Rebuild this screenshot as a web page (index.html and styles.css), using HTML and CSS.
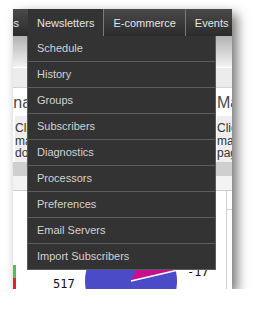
FILE: index.html
```html
<!DOCTYPE html>
<html lang="en">
<head>
    <meta charset="UTF-8">
    <meta name="viewport" content="width=device-width, initial-scale=1.0">
    <title>Newsletters menu</title>
    <link rel="stylesheet" href="styles.css">
</head>
<body>
    <div class="shot">
        <ul class="topnav">
            <li class="nav-item nav-cut"><span>Campaigns</span></li>
            <li class="nav-item active">Newsletters</li>
            <li class="nav-item">E-commerce</li>
            <li class="nav-item">Events</li>
        </ul>
        <div class="subbar"></div>
        <div class="crumbs"></div>

        <div class="panels">
            <div class="panel panel-left">
                <h2 class="panel-title">Manage Lists</h2>
                <p class="panel-desc">Click here to create new lists and<br>manage the existing ones, or<br>do an import.</p>
            </div>
            <div class="panel panel-right">
                <h2 class="panel-title">Manage Pages</h2>
                <p class="panel-desc">Click here to create and<br>manage your landing<br>pages.</p>
            </div>
        </div>

        <div class="band"></div>
        <div class="band-light"></div>

        <div class="stats">
            <svg width="219" height="98" viewBox="0 0 219 98">
                <rect x="0" y="74" width="3" height="13" fill="#4cc43c"/>
                <rect x="0" y="87" width="3" height="11" fill="#e82020"/>
                <circle cx="118" cy="90" r="46" fill="#4b4bc8"/>
                <path d="M118 90 L162.8 79.7 A46 46 0 0 0 137.4 48.3 Z" fill="#c8108c"/>
                <line x1="118" y1="90" x2="163" y2="79.6" stroke="#fff" stroke-width="1.5"/>
                <text x="40" y="97" class="stat-num">517</text>
                <text x="174" y="85" class="stat-num">-17</text>
                <line x1="213.5" y1="0" x2="213.5" y2="98" stroke="#cfcfcf"/>
                <line x1="214" y1="18.5" x2="219" y2="18.5" stroke="#cfcfcf"/>
            </svg>
        </div>

        <ul class="dropdown">
            <li>Schedule</li>
            <li>History</li>
            <li>Groups</li>
            <li>Subscribers</li>
            <li>Diagnostics</li>
            <li>Processors</li>
            <li>Preferences</li>
            <li>Email Servers</li>
            <li>Import Subscribers</li>
        </ul>
    </div>
</body>
</html>
```
FILE: styles.css
```css
body {
    margin: 0;
    padding: 9px 0 0 13px;
    background-color: #fff;
    font-family: "Liberation Sans", Arial, sans-serif;
}

.shot {
    position: relative;
    width: 219px;
    height: 280px;
    overflow: hidden;
    background-color: #fff;
    box-shadow: 5px 5px 11px rgba(0, 0, 0, 0.55);
}

.topnav {
    display: flex;
    height: 27px;
    margin: 0;
    padding: 0;
    list-style: none;
    background: linear-gradient(#4a4a4a, #2b2b2b);
}

.nav-item {
    display: flex;
    flex-shrink: 0;
    align-items: center;
    padding: 0 9px;
    font-size: 11px;
    color: #e4e4e4;
    white-space: nowrap;
    border-left: 1px solid #7a7a7a;
}

.nav-cut {
    width: 6px;
    padding-left: 0;
    justify-content: flex-end;
    overflow: hidden;
    border-left: none;
}

.topnav .active {
    background-color: #333;
    border-left: none;
}

.subbar {
    height: 31px;
    background: linear-gradient(#b2b2b2, #f2f2f2);
    border-bottom: 1px solid #fff;
}

.crumbs {
    height: 19px;
    background-color: #ececec;
    border-bottom: 1px solid #d4d4d4;
}

.panels {
    display: flex;
    height: 68px;
    padding-top: 6px;
    overflow: hidden;
}

.panel {
    flex: 0 0 auto;
    overflow: hidden;
    white-space: nowrap;
}

.panel-left {
    width: 198px;
    padding-left: 2px;
    box-sizing: border-box;
}

.panel-right {
    width: 120px;
    padding-left: 6px;
}

.panel-title {
    margin: 0;
    font-size: 16px;
    line-height: 18px;
    font-weight: normal;
    color: #4a4a4a;
}

.panel-left .panel-title {
    margin-left: -24px;
}

.panel-desc {
    margin: 4px 0 0;
    padding: 6px 0 8px;
    font-size: 12px;
    line-height: 12.5px;
    color: #333;
    background-color: #eee;
}

.band {
    height: 14px;
    background-color: #cfcfcf;
}

.band-light {
    height: 14px;
    background-color: #f3f3f3;
    border-bottom: 1px solid #cdcdcd;
}

.stats svg {
    display: block;
}

.stat-num {
    font-family: "DejaVu Sans Mono", monospace;
    font-size: 12px;
    fill: #111;
}

.dropdown {
    position: absolute;
    top: 27px;
    left: 14px;
    width: 189px;
    margin: 0;
    padding: 0;
    list-style: none;
    background-color: #333;
    border: 1px solid #5a5a5a;
    border-top: none;
    box-sizing: border-box;
}

.dropdown li {
    height: 25px;
    line-height: 25px;
    padding-left: 9px;
    font-size: 11px;
    color: #d2d2d2;
    border-bottom: 1px solid #5c5c5c;
}

.dropdown li:last-child {
    border-bottom: none;
}
```
